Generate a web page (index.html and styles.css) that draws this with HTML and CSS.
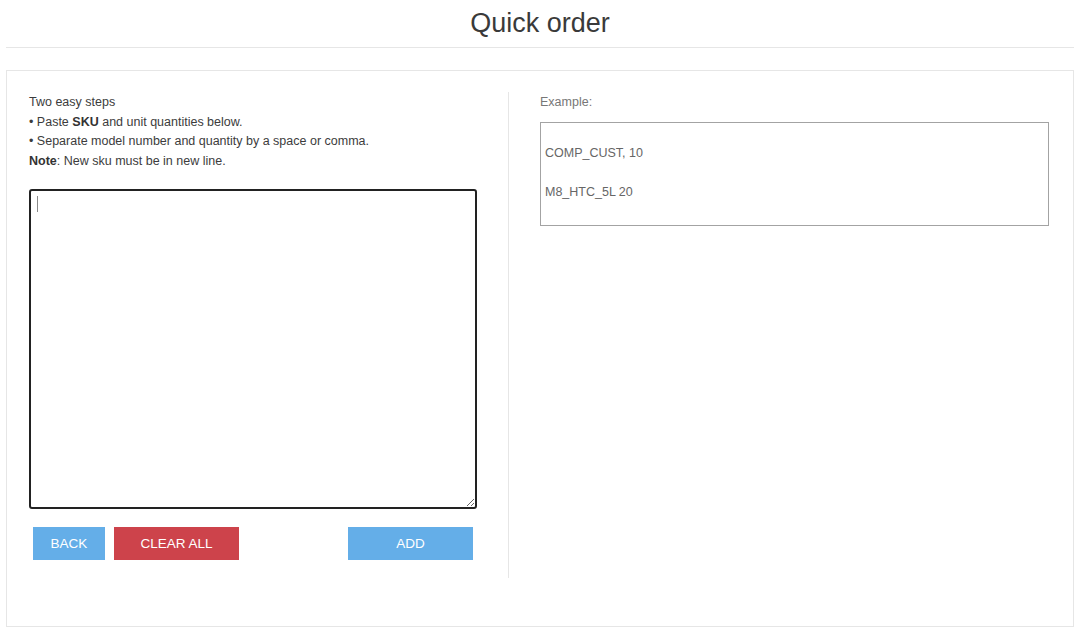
FILE: index.html
```
<!DOCTYPE html>
<html lang="en">
<head>
<meta charset="utf-8">
<title>Quick order</title>
<link rel="stylesheet" href="styles.css">
</head>
<body>
<div class="page">
  <header class="header">
    <h1 class="title">Quick order</h1>
  </header>
  <section class="panel">
    <div class="col-left">
      <div class="steps">
        <div>Two easy steps</div>
        <div>• Paste <b>SKU</b> and unit quantities below.</div>
        <div>• Separate model number and quantity by a space or comma.</div>
        <div><b>Note</b>: New sku must be in new line.</div>
      </div>
      <div class="input-wrap">
        <textarea class="sku-input"></textarea>
        <span class="caret"></span>
      </div>
      <div class="actions">
        <div class="actions-left">
          <button class="btn btn-blue btn-back">BACK</button>
          <button class="btn btn-red btn-wide">CLEAR ALL</button>
        </div>
        <button class="btn btn-blue btn-wide">ADD</button>
      </div>
    </div>
    <div class="col-right">
      <div class="example-label">Example:</div>
      <div class="example-box">
        <p>COMP_CUST, 10</p>
        <p>M8_HTC_5L 20</p>
      </div>
    </div>
  </section>
</div>
</body>
</html>
```
FILE: styles.css
```
* { box-sizing: border-box; }
html, body { margin: 0; padding: 0; background: #fff; }
body {
  font-family: "Liberation Sans", Arial, sans-serif;
  font-size: 12.5px;
  color: #3c3c3c;
}
.page { padding: 0 6px; }
.header {
  padding: 8px 0 9px;
  border-bottom: 1px solid #e6e6e6;
}
.title {
  margin: 0;
  text-align: center;
  font-size: 27px;
  font-weight: normal;
  line-height: 30px;
  color: #3a3a3a;
}
.panel {
  margin-top: 22px;
  border: 1px solid #e6e6e6;
  height: 557px;
  padding: 21px 0 0;
  display: grid;
  grid-template-columns: 502px 1fr;
  align-items: start;
}
.col-left {
  padding: 0 31px 18px 22px;
  border-right: 1px solid #e6e6e6;
}
.steps { line-height: 19.5px; padding-top: 1px; color: #3c3c3c; }
.steps b { font-weight: bold; color: #333; }
.input-wrap {
  position: relative;
  margin-top: 18px;
  height: 320px;
}
.sku-input {
  display: block;
  width: 448px;
  height: 320px;
  border: 2px solid #222;
  border-radius: 3px;
  padding: 4px 6px;
  font-family: inherit;
  font-size: 13px;
  outline: none;
}
.caret {
  position: absolute;
  left: 8px;
  top: 7px;
  width: 1px;
  height: 16px;
  background: #8a8a8a;
}
.actions {
  margin-top: 18px;
  display: flex;
  justify-content: space-between;
  padding: 0 4px;
}
.actions-left { display: flex; gap: 9px; }
.btn {
  height: 33px;
  border: none;
  border-radius: 0;
  color: #fff;
  font-family: "Liberation Sans", Arial, sans-serif;
  font-size: 13.5px;
  padding: 0;
  cursor: pointer;
}
.btn-blue { background: #64aee8; }
.btn-red { background: #cd434b; }
.btn-back { width: 72px; }
.btn-wide { width: 125px; }
.col-right {
  padding: 1px 24px 0 31px;
}
.example-label {
  line-height: 19.5px;
  color: #777;
}
.example-box {
  margin-top: 9px;
  height: 104px;
  border: 1px solid #a3a3a3;
  padding: 21.5px 4px 0;
  display: flex;
  flex-direction: column;
  gap: 19.5px;
  color: #666;
}
.example-box p { margin: 0; line-height: 19.5px; }
```
